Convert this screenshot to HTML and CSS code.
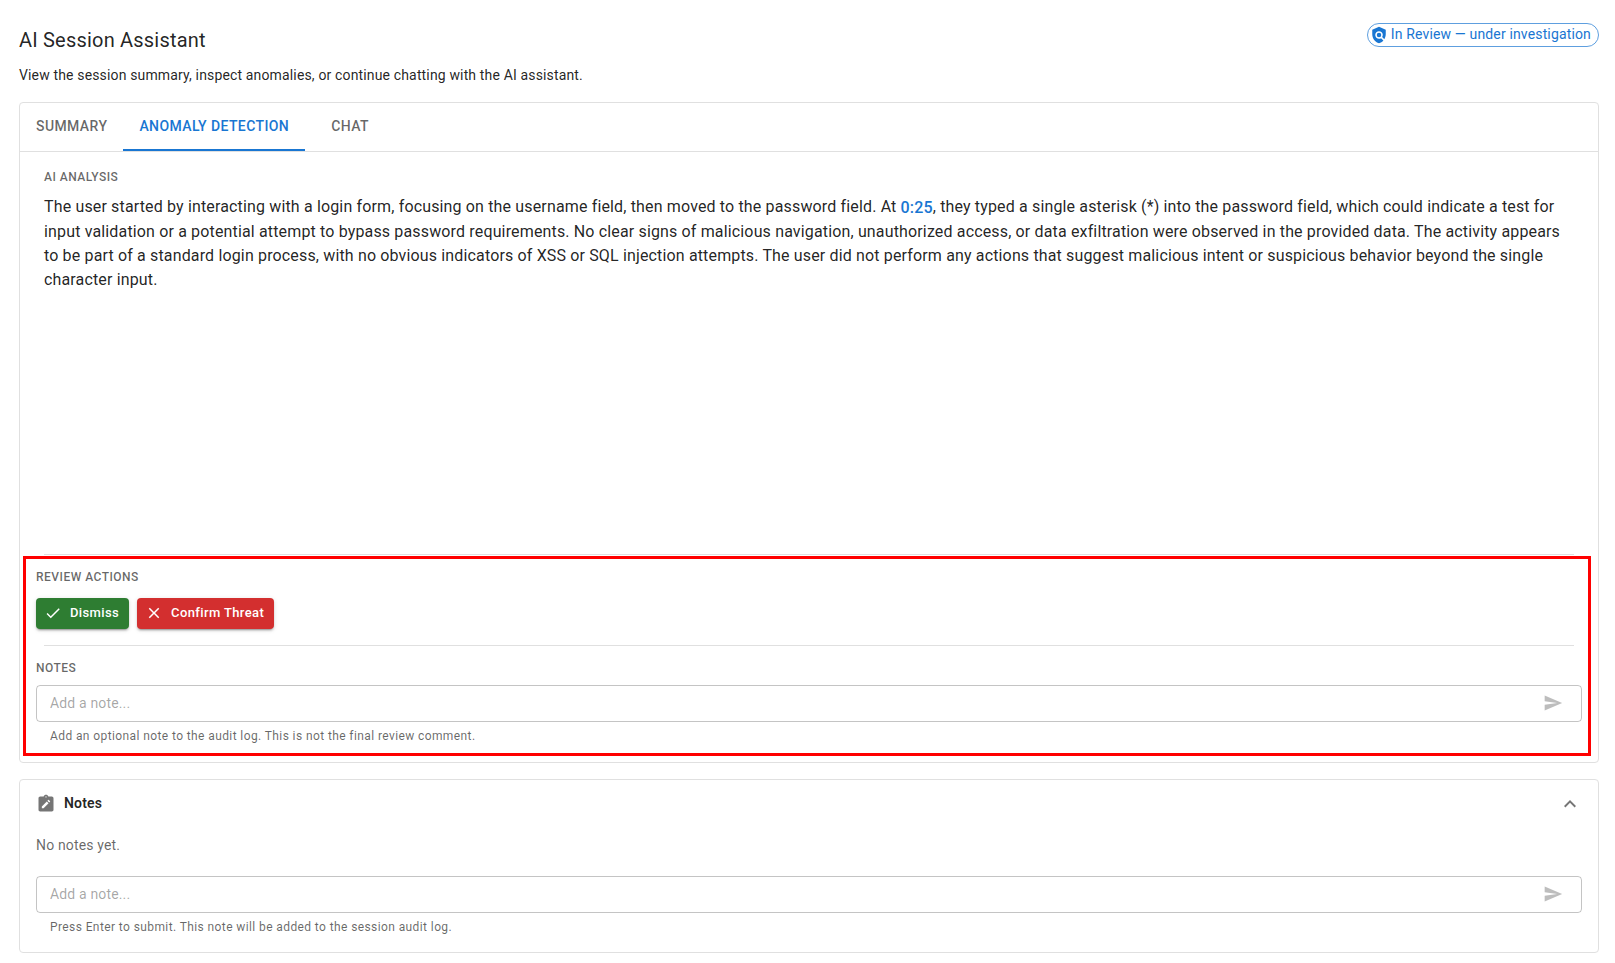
FILE: index.html
```html
<!DOCTYPE html>
<html lang="en">
<head>
  <meta charset="UTF-8">
  <meta name="viewport" content="width=device-width, initial-scale=1.0">
  <title>AI Session Assistant</title>
  <link rel="stylesheet" href="styles.css">
</head>
<body>
  <main class="page">
    <header class="header">
      <div>
        <h1 class="title">AI Session Assistant</h1>
        <p class="subtitle">View the session summary, inspect anomalies, or continue chatting with the AI assistant.</p>
      </div>
      <div class="status-chip">
        <svg width="18" height="18" viewBox="0 0 24 24" fill="currentColor" aria-hidden="true">
          <path d="m21 5-9-4-9 4v6c0 5.55 3.84 10.74 9 12 2.3-.56 4.33-1.9 5.88-3.71l-3.12-3.12c-1.94 1.29-4.58 1.07-6.29-.64-1.95-1.95-1.95-5.12 0-7.07 1.95-1.95 5.12-1.95 7.07 0 1.71 1.71 1.92 4.35.64 6.29l2.9 2.9C20.29 15.69 21 13.38 21 11z"/>
          <circle cx="12" cy="12" r="3"/>
        </svg>
        <span class="status-label">In Review — under investigation</span>
      </div>
    </header>

    <section class="card assistant">
      <div class="tabs" role="tablist">
        <button class="tab" role="tab" aria-selected="false">Summary</button>
        <button class="tab active" role="tab" aria-selected="true">Anomaly Detection</button>
        <button class="tab" role="tab" aria-selected="false">Chat</button>
      </div>

      <div class="analysis" role="tabpanel">
        <h2 class="section-label">AI Analysis</h2>
        <p class="analysis-text">The user started by interacting with a login form, focusing on the username field, then moved to the password field. At <a href="#t=25" class="timestamp">0:25</a>, they typed a single asterisk (*) into the password field, which could indicate a test for input validation or a potential attempt to bypass password requirements. No clear signs of malicious navigation, unauthorized access, or data exfiltration were observed in the provided data. The activity appears to be part of a standard login process, with no obvious indicators of XSS or SQL injection attempts. The user did not perform any actions that suggest malicious intent or suspicious behavior beyond the single character input.</p>
      </div>

      <div class="review">
        <hr class="divider">
        <h2 class="section-label">Review Actions</h2>
        <div class="actions">
          <button class="btn btn-dismiss">
            <svg width="18" height="18" viewBox="0 0 24 24" fill="currentColor" aria-hidden="true">
              <path d="M9 16.17 4.83 12l-1.42 1.41L9 19 21 7l-1.41-1.41z"/>
            </svg>
            Dismiss
          </button>
          <button class="btn btn-threat">
            <svg width="18" height="18" viewBox="0 0 24 24" fill="currentColor" aria-hidden="true">
              <path d="M19 6.41 17.59 5 12 10.59 6.41 5 5 6.41 10.59 12 5 17.59 6.41 19 12 13.41 17.59 19 19 17.59 13.41 12z"/>
            </svg>
            Confirm Threat
          </button>
        </div>
        <hr class="divider">
        <label class="section-label" for="reviewNote">Notes</label>
        <div class="note-field">
          <input type="text" id="reviewNote" placeholder="Add a note..." aria-describedby="reviewNoteHelp">
          <button class="send-btn" aria-label="Send note" disabled>
            <svg width="20" height="20" viewBox="0 0 24 24" fill="currentColor" aria-hidden="true">
              <path d="M2.01 21 23 12 2.01 3 2 10l15 2-15 2z"/>
            </svg>
          </button>
        </div>
        <p class="helper-text" id="reviewNoteHelp">Add an optional note to the audit log. This is not the final review comment.</p>
        <div class="highlight"></div>
      </div>
    </section>

    <section class="card notes">
      <div class="notes-header">
        <svg class="notes-icon" width="20" height="20" viewBox="0 0 24 24" fill="currentColor" aria-hidden="true">
          <path fill-rule="evenodd" d="M19 3h-4.18C14.4 1.84 13.3 1 12 1s-2.4.84-2.82 2H5c-1.1 0-2 .9-2 2v14c0 1.1.9 2 2 2h14c1.1 0 2-.9 2-2V5c0-1.1-.9-2-2-2m-7-.25c.41 0 .75.34.75.75s-.34.75-.75.75-.75-.34-.75-.75.34-.75.75-.75M9.1 17H7v-2.14l5.96-5.96 2.12 2.12zm7.75-7.73-1.06 1.06-2.12-2.12 1.06-1.06c.2-.2.51-.2.71 0l1.41 1.41c.2.2.2.51 0 .71"/>
        </svg>
        <h2 class="notes-title">Notes</h2>
        <button class="collapse-btn" aria-label="Collapse notes" aria-expanded="true">
          <svg width="24" height="24" viewBox="0 0 24 24" fill="currentColor" aria-hidden="true">
            <path d="m12 8-6 6 1.41 1.41L12 10.83l4.59 4.58L18 14z"/>
          </svg>
        </button>
      </div>
      <p class="empty-text">No notes yet.</p>
      <div class="note-field">
        <input type="text" id="sessionNote" placeholder="Add a note..." aria-label="Session note" aria-describedby="sessionNoteHelp">
        <button class="send-btn" aria-label="Send note" disabled>
          <svg width="20" height="20" viewBox="0 0 24 24" fill="currentColor" aria-hidden="true">
            <path d="M2.01 21 23 12 2.01 3 2 10l15 2-15 2z"/>
          </svg>
        </button>
      </div>
      <p class="helper-text" id="sessionNoteHelp">Press Enter to submit. This note will be added to the session audit log.</p>
    </section>
  </main>
</body>
</html>
```
FILE: styles.css
```css
:root {
  --primary: #1976d2;
  --success: #2e7d32;
  --error: #d32f2f;
  --text-primary: rgba(0, 0, 0, 0.87);
  --text-secondary: rgba(0, 0, 0, 0.6);
  --border-color: #e0e0e0;
  --radius: 4px;
}

* {
  box-sizing: border-box;
  margin: 0;
  padding: 0;
}

body {
  font-family: Roboto, "Liberation Sans", sans-serif;
  font-size: 14px;
  line-height: 20px;
  letter-spacing: 0.01071em;
  color: var(--text-primary);
  background: #fff;
}

button, input {
  font: inherit;
  letter-spacing: inherit;
  color: inherit;
  background: none;
  border: none;
}

button {
  cursor: pointer;
}

svg {
  display: block;
  flex-shrink: 0;
}

.page {
  min-height: 100vh;
  padding: 23px 16px 10px 19px;
  display: flex;
  flex-direction: column;
}

.header {
  display: flex;
  justify-content: space-between;
  align-items: flex-start;
  margin-bottom: 17px;
}

.title {
  font-size: 20px;
  font-weight: 400;
  line-height: 32px;
  margin-top: 1px;
  margin-bottom: 9px;
  letter-spacing: 0.01em;
}

.status-chip {
  display: flex;
  align-items: center;
  gap: 3px;
  height: 24px;
  padding: 0 7px 0 2px;
  color: var(--primary);
  border: 1px solid rgba(25, 118, 210, 0.7);
  border-radius: 12px;
  white-space: nowrap;
}

.status-label {
  padding-bottom: 2px;
}

.card {
  border: 1px solid var(--border-color);
  border-radius: var(--radius);
}

.assistant {
  flex: 1;
  display: flex;
  flex-direction: column;
  margin-bottom: 16px;
}

.tabs {
  display: flex;
  border-bottom: 1px solid var(--border-color);
}

.tab {
  min-width: 90px;
  height: 48px;
  padding: 0 16px;
  font-weight: 500;
  letter-spacing: 0.02857em;
  text-transform: uppercase;
  color: var(--text-secondary);
  border-bottom: 2px solid transparent;
}

.tab.active {
  color: var(--primary);
  border-bottom-color: var(--primary);
}

.analysis {
  flex: 1;
  padding: 15px 24px;
}

.section-label {
  display: block;
  font-size: 12px;
  font-weight: 500;
  line-height: 20px;
  letter-spacing: 0.04em;
  text-transform: uppercase;
  color: var(--text-secondary);
}

.analysis-text {
  margin-top: 8px;
  font-size: 16px;
  line-height: 24px;
  letter-spacing: 0.00938em;
}

.timestamp {
  display: inline-block;
  vertical-align: -1px;
  font-weight: 500;
  color: var(--primary);
  text-decoration: none;
}

.review {
  position: relative;
  padding: 0 16px 16px;
}

.divider {
  height: 1px;
  margin: 0 8px 12px;
  border: none;
  background: var(--border-color);
}

.actions {
  display: flex;
  gap: 8px;
  margin: 11px 0 16px;
}

.btn {
  display: flex;
  align-items: center;
  gap: 8px;
  height: 31px;
  padding: 0 10px 1px 8px;
  font-size: 13px;
  font-weight: 500;
  letter-spacing: 0.02857em;
  color: #fff;
  border-radius: var(--radius);
  box-shadow: 0 3px 1px -2px rgba(0, 0, 0, 0.2), 0 2px 2px 0 rgba(0, 0, 0, 0.14), 0 1px 5px 0 rgba(0, 0, 0, 0.12);
}

.btn-dismiss {
  background: var(--success);
}

.btn-threat {
  background: var(--error);
}

.note-field {
  display: flex;
  align-items: center;
  height: 37px;
  margin-top: 7px;
  padding: 0 13px 2px;
  border: 1px solid rgba(0, 0, 0, 0.23);
  border-radius: var(--radius);
}

.note-field:focus-within {
  border-color: var(--primary);
}

.note-field input {
  flex: 1;
  min-width: 0;
  outline: none;
}

.note-field input::placeholder {
  color: rgba(0, 0, 0, 0.36);
  opacity: 1;
}

.send-btn {
  padding: 5px;
  color: rgba(0, 0, 0, 0.26);
}

.helper-text {
  margin: 4px 14px 0;
  font-size: 12px;
  letter-spacing: 0.03333em;
  color: var(--text-secondary);
}

/* outline around the review area */
.highlight {
  position: absolute;
  inset: 2px 7px 6px 3px;
  border: 3px solid #f00;
  pointer-events: none;
}

.notes {
  padding: 12px 16px 15px;
}

.notes-header {
  display: flex;
  align-items: center;
  gap: 8px;
}

.notes-icon,
.collapse-btn {
  color: rgba(0, 0, 0, 0.54);
}

.notes-title {
  flex: 1;
  padding-bottom: 2px;
  font-size: 14px;
  font-weight: 600;
  line-height: 22px;
}

.empty-text {
  margin: 19px 0 21px;
  color: var(--text-secondary);
}
```
